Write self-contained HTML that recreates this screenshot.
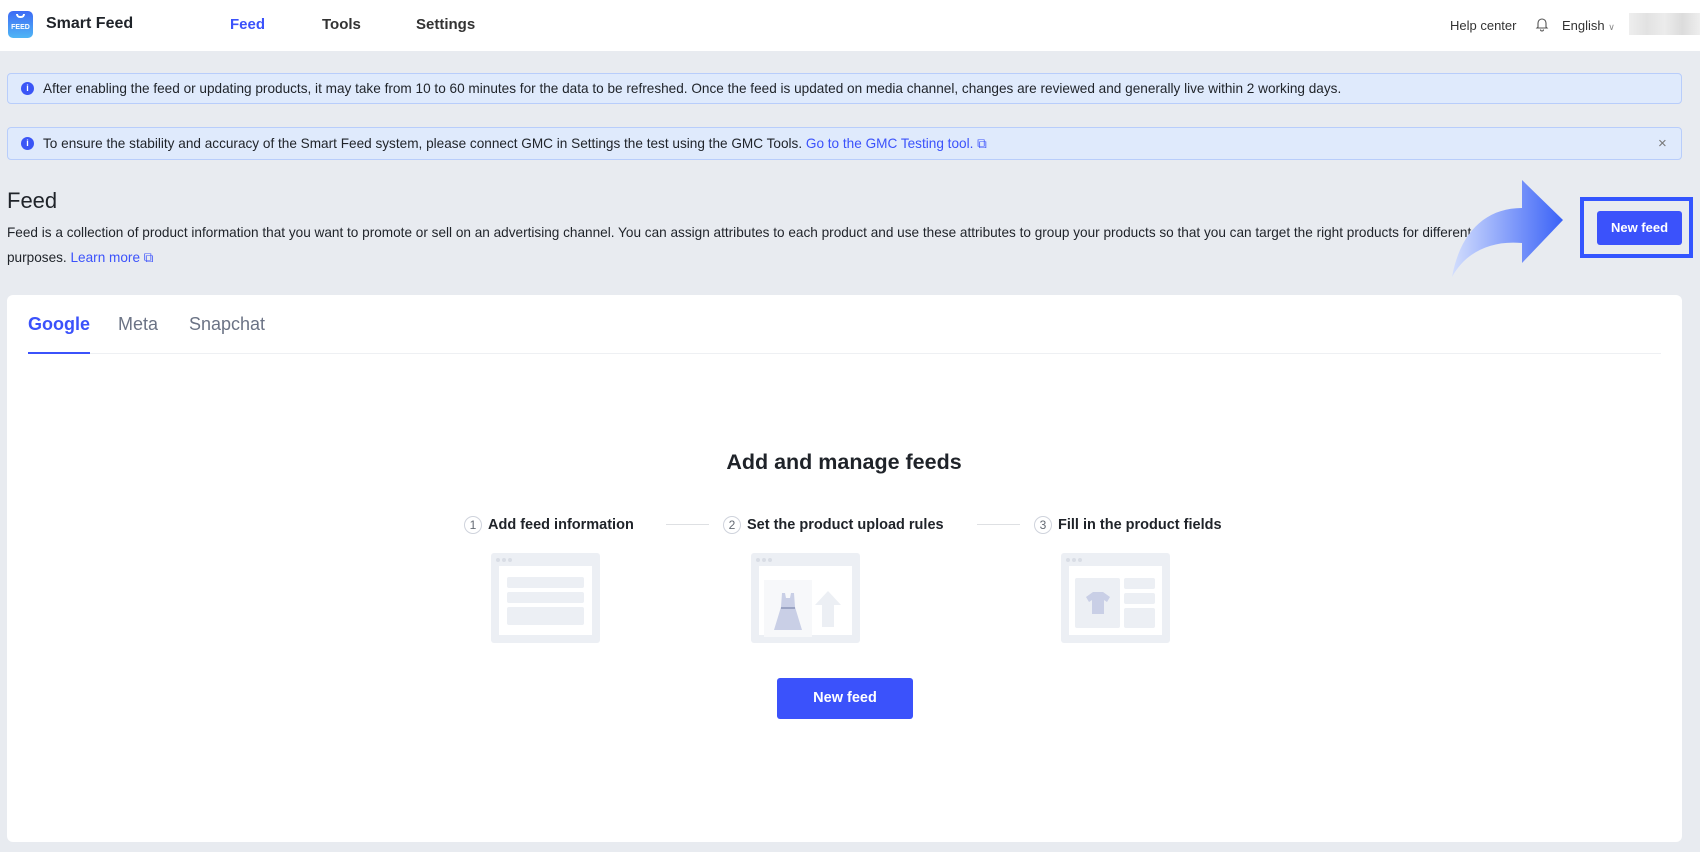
<!DOCTYPE html>
<html><head><meta charset="utf-8"><style>
*{box-sizing:border-box;margin:0;padding:0}
body{width:1700px;height:852px;background:#e8ebf0;font-family:"Liberation Sans",sans-serif;color:#1f2329;position:relative;overflow:hidden}
.abs{position:absolute}
.hdr{left:0;top:0;width:1700px;height:51px;background:#fff}
.nav{font-size:15px;top:16px}
.banner{left:7px;width:1675px;background:#dfeafc;border:1px solid #b8cdfb;border-radius:4px;font-size:13.6px;color:#1f2329}
.ic{position:absolute;left:13px;width:13px;height:13px;border-radius:50%;background:#3a55f6;color:#fff;font-size:9px;text-align:center;line-height:13px;font-weight:bold}
.btn{background:#3b52fb;color:#fff;font-weight:bold;border-radius:3px;text-align:center}
.step{top:516px;font-size:14.5px;font-weight:bold;color:#1f2329}
.num{display:inline-block;width:18px;height:18px;border:1px solid #cfd3dc;border-radius:50%;text-align:center;line-height:16px;font-size:12px;font-weight:normal;color:#646a73;margin-right:6px;vertical-align:middle}
.ill{top:553px;width:109px;height:90px;background:#eceff4;border-radius:3px}
.ill .in{position:absolute;left:8px;top:13px;right:8px;bottom:8px;background:#fff}
.dot{position:absolute;top:5px;width:4px;height:4px;border-radius:50%;background:#d9dde5}
.bar{position:absolute;background:#eceff4;border-radius:2px}
.line{top:524px;height:1px;background:#dee0e3}
</style></head><body>
<div class="abs hdr"></div>
<div class="abs" style="left:8px;top:11px;width:25px;height:27px;border-radius:5px;background:linear-gradient(#3d6bf5,#4fb6f5)">
<div class="abs" style="left:8px;top:3px;width:9px;height:4px;border:2px solid #fff;border-top:none;border-radius:0 0 5px 5px"></div>
<div class="abs" style="left:0;top:13px;width:25px;text-align:center;color:#fff;font-size:7px;font-weight:bold">FEED</div></div>
<div class="abs" style="left:46px;top:15px;font-size:16px;font-weight:bold;color:#1f2329">Smart Feed</div>
<div class="abs nav" style="left:230px;color:#3b52fb;font-weight:bold">Feed</div>
<div class="abs nav" style="left:322px;font-weight:bold;color:#333">Tools</div>
<div class="abs nav" style="left:416px;font-weight:bold;color:#333">Settings</div>
<div class="abs" style="left:1450px;top:18px;font-size:13px;color:#333">Help center</div>
<svg class="abs" style="left:1535px;top:17px" width="14" height="15" viewBox="0 0 14 15"><path d="M3 10V6a4 4 0 018 0v4l1 1H2z M5.5 12.5a1.5 1.5 0 003 0" fill="none" stroke="#555" stroke-width="1.1"/></svg>
<div class="abs" style="left:1562px;top:18px;font-size:13px;color:#333">English <span style="font-size:9px;color:#888">&#8744;</span></div>
<div class="abs" style="left:1629px;top:13px;width:71px;height:22px;background:linear-gradient(90deg,#eee,#e2e2e2,#ececec,#dcdcdc,#eee)"></div>

<div class="abs banner" style="top:73px;height:31px"><div class="ic" style="top:8px">i</div><div class="abs" style="left:35px;top:7px">After enabling the feed or updating products, it may take from 10 to 60 minutes for the data to be refreshed. Once the feed is updated on media channel, changes are reviewed and generally live within 2 working days.</div></div>
<div class="abs banner" style="top:127px;height:33px"><div class="ic" style="top:9px">i</div><div class="abs" style="left:35px;top:8px">To ensure the stability and accuracy of the Smart Feed system, please connect GMC in Settings the test using the GMC Tools. <span style="color:#3b52fb">Go to the GMC Testing tool. &#10697;</span></div><div class="abs" style="left:1650px;top:7px;font-size:15px;color:#777">&#215;</div></div>

<div class="abs" style="left:7px;top:188px;font-size:22px;color:#1f2329">Feed</div>
<div class="abs" style="left:7px;top:220px;font-size:13.6px;line-height:25px;color:#1f2329;white-space:nowrap">Feed is a collection of product information that you want to promote or sell on an advertising channel. You can assign attributes to each product and use these attributes to group your products so that you can target the right products for different marketing<br>purposes. <span style="color:#3b52fb">Learn more &#10697;</span></div>

<svg class="abs" style="left:1450px;top:178px" width="115" height="102" viewBox="0 0 115 102"><defs><linearGradient id="g" x1="0" x2="1"><stop offset="0" stop-color="#d3defd"/><stop offset="1" stop-color="#3a62f7"/></linearGradient></defs><path d="M2 99C10 55 35 30 72 30V2L113 42L72 85V65C40 62 15 75 2 99Z" fill="url(#g)"/></svg>
<div class="abs" style="left:1580px;top:197px;width:113px;height:61px;border:4px solid #3355ff;background:#e8ebf0"></div>
<div class="abs btn" style="left:1597px;top:211px;width:85px;height:34px;line-height:34px;font-size:13px">New feed</div>

<div class="abs" style="left:7px;top:295px;width:1675px;height:547px;background:#fff;border-radius:6px"></div>
<div class="abs" style="left:28px;top:314px;font-size:18px;font-weight:bold;color:#3b52fb">Google</div>
<div class="abs" style="left:118px;top:314px;font-size:18px;color:#6b7385">Meta</div>
<div class="abs" style="left:189px;top:314px;font-size:18px;color:#6b7385">Snapchat</div>
<div class="abs" style="left:29px;top:353px;width:1632px;height:1px;background:#eef0f3"></div>
<div class="abs" style="left:28px;top:352px;width:62px;height:2px;background:#3b52fb"></div>

<div class="abs" style="left:0;width:1688px;text-align:center;top:450px;font-size:21.5px;font-weight:bold;color:#1f2329">Add and manage feeds</div>
<div class="abs step" style="left:464px"><span class="num">1</span>Add feed information</div>
<div class="abs line" style="left:666px;width:43px"></div>
<div class="abs step" style="left:723px"><span class="num">2</span>Set the product upload rules</div>
<div class="abs line" style="left:977px;width:43px"></div>
<div class="abs step" style="left:1034px"><span class="num">3</span>Fill in the product fields</div>

<div class="abs ill" style="left:491px"><div class="dot" style="left:5px"></div><div class="dot" style="left:11px"></div><div class="dot" style="left:17px"></div><div class="in"></div><div class="bar" style="left:16px;top:24px;width:77px;height:11px"></div><div class="bar" style="left:16px;top:39px;width:77px;height:11px"></div><div class="bar" style="left:16px;top:54px;width:77px;height:18px"></div></div>
<div class="abs ill" style="left:751px"><div class="dot" style="left:5px"></div><div class="dot" style="left:11px"></div><div class="dot" style="left:17px"></div><div class="in"></div><div class="abs" style="left:13px;top:27px;width:48px;height:57px;background:#f7f8fa"></div>
<svg class="abs" style="left:22px;top:38px" width="30" height="42" viewBox="0 0 30 42"><path d="M9 2h3l1 5h4l1-5h3l1 14 7 23H1L8 16z" fill="#c9cfe6"/><rect x="8" y="16" width="14" height="2" fill="#9aa3c3"/></svg>
<svg class="abs" style="left:64px;top:38px" width="26" height="36" viewBox="0 0 26 36"><path d="M13 0L26 14H19V36H7V14H0z" fill="#eceff4"/></svg></div>
<div class="abs ill" style="left:1061px"><div class="dot" style="left:5px"></div><div class="dot" style="left:11px"></div><div class="dot" style="left:17px"></div><div class="in"></div><div class="bar" style="left:14px;top:25px;width:45px;height:50px"></div>
<svg class="abs" style="left:25px;top:38px" width="24" height="24" viewBox="0 0 24 24"><path d="M7 1h10l7 5-3 5-3-2v14H6V9L3 11 0 6z" fill="#c9cfe6"/></svg>
<div class="bar" style="left:63px;top:25px;width:31px;height:11px"></div><div class="bar" style="left:63px;top:40px;width:31px;height:11px"></div><div class="bar" style="left:63px;top:55px;width:31px;height:20px"></div></div>

<div class="abs btn" style="left:777px;top:678px;width:136px;height:41px;line-height:41px;font-size:14.5px">New feed</div>
</body></html>
